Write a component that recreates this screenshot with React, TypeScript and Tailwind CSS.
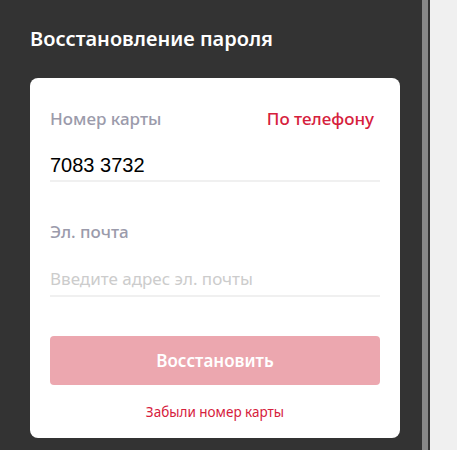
export default function App() {
  return (
    <div className="flex h-[450px] w-[457px] overflow-hidden font-['Noto_Sans',sans-serif]">
      <div className="w-[422px] shrink-0 bg-[#333333] pl-[30px] pr-[22px] pt-[25px]">
        <h1 className="text-[20px] font-semibold leading-[28px] text-white">
          Восстановление пароля
        </h1>
        <div className="mt-[25px] rounded-[8px] bg-white px-[20px] pb-[16px] pt-[29px]">
          <div className="flex items-center justify-between text-[17px] font-medium leading-[24px]">
            <span className="text-[#9b9bab]">Номер карты</span>
            <span className="mr-[6px] text-[#d6203c]">По телефону</span>
          </div>
          <div className="mt-[22px] pb-[3px] font-['Liberation_Sans',Arial,sans-serif] text-[20px] leading-[24px] text-black">
            7083 3732
          </div>
          <div className="h-[2px] bg-[#f0f0f0]" />
          <div className="mt-[38px] text-[17px] font-medium leading-[24px] text-[#9b9bab]">
            Эл. почта
          </div>
          <div className="mt-[23px] pb-[4px] text-[17px] leading-[24px] text-[#cccccc]">
            Введите адрес эл. почты
          </div>
          <div className="h-[2px] bg-[#f0f0f0]" />
          <div className="mt-[39px] flex h-[49px] items-center justify-center rounded-[4px] bg-[#eca7af] text-[17px] font-semibold text-white">
            Восстановить
          </div>
          <div className="mt-[17px] text-center text-[13.5px] leading-[20px] text-[#d6203c]">
            Забыли номер карты
          </div>
        </div>
      </div>
      <div className="w-[6px] shrink-0 bg-[#888888]" />
      <div className="w-[2px] shrink-0 bg-[#333333]" />
      <div className="flex-1 bg-[#f0f0f0]" />
    </div>
  );
}
